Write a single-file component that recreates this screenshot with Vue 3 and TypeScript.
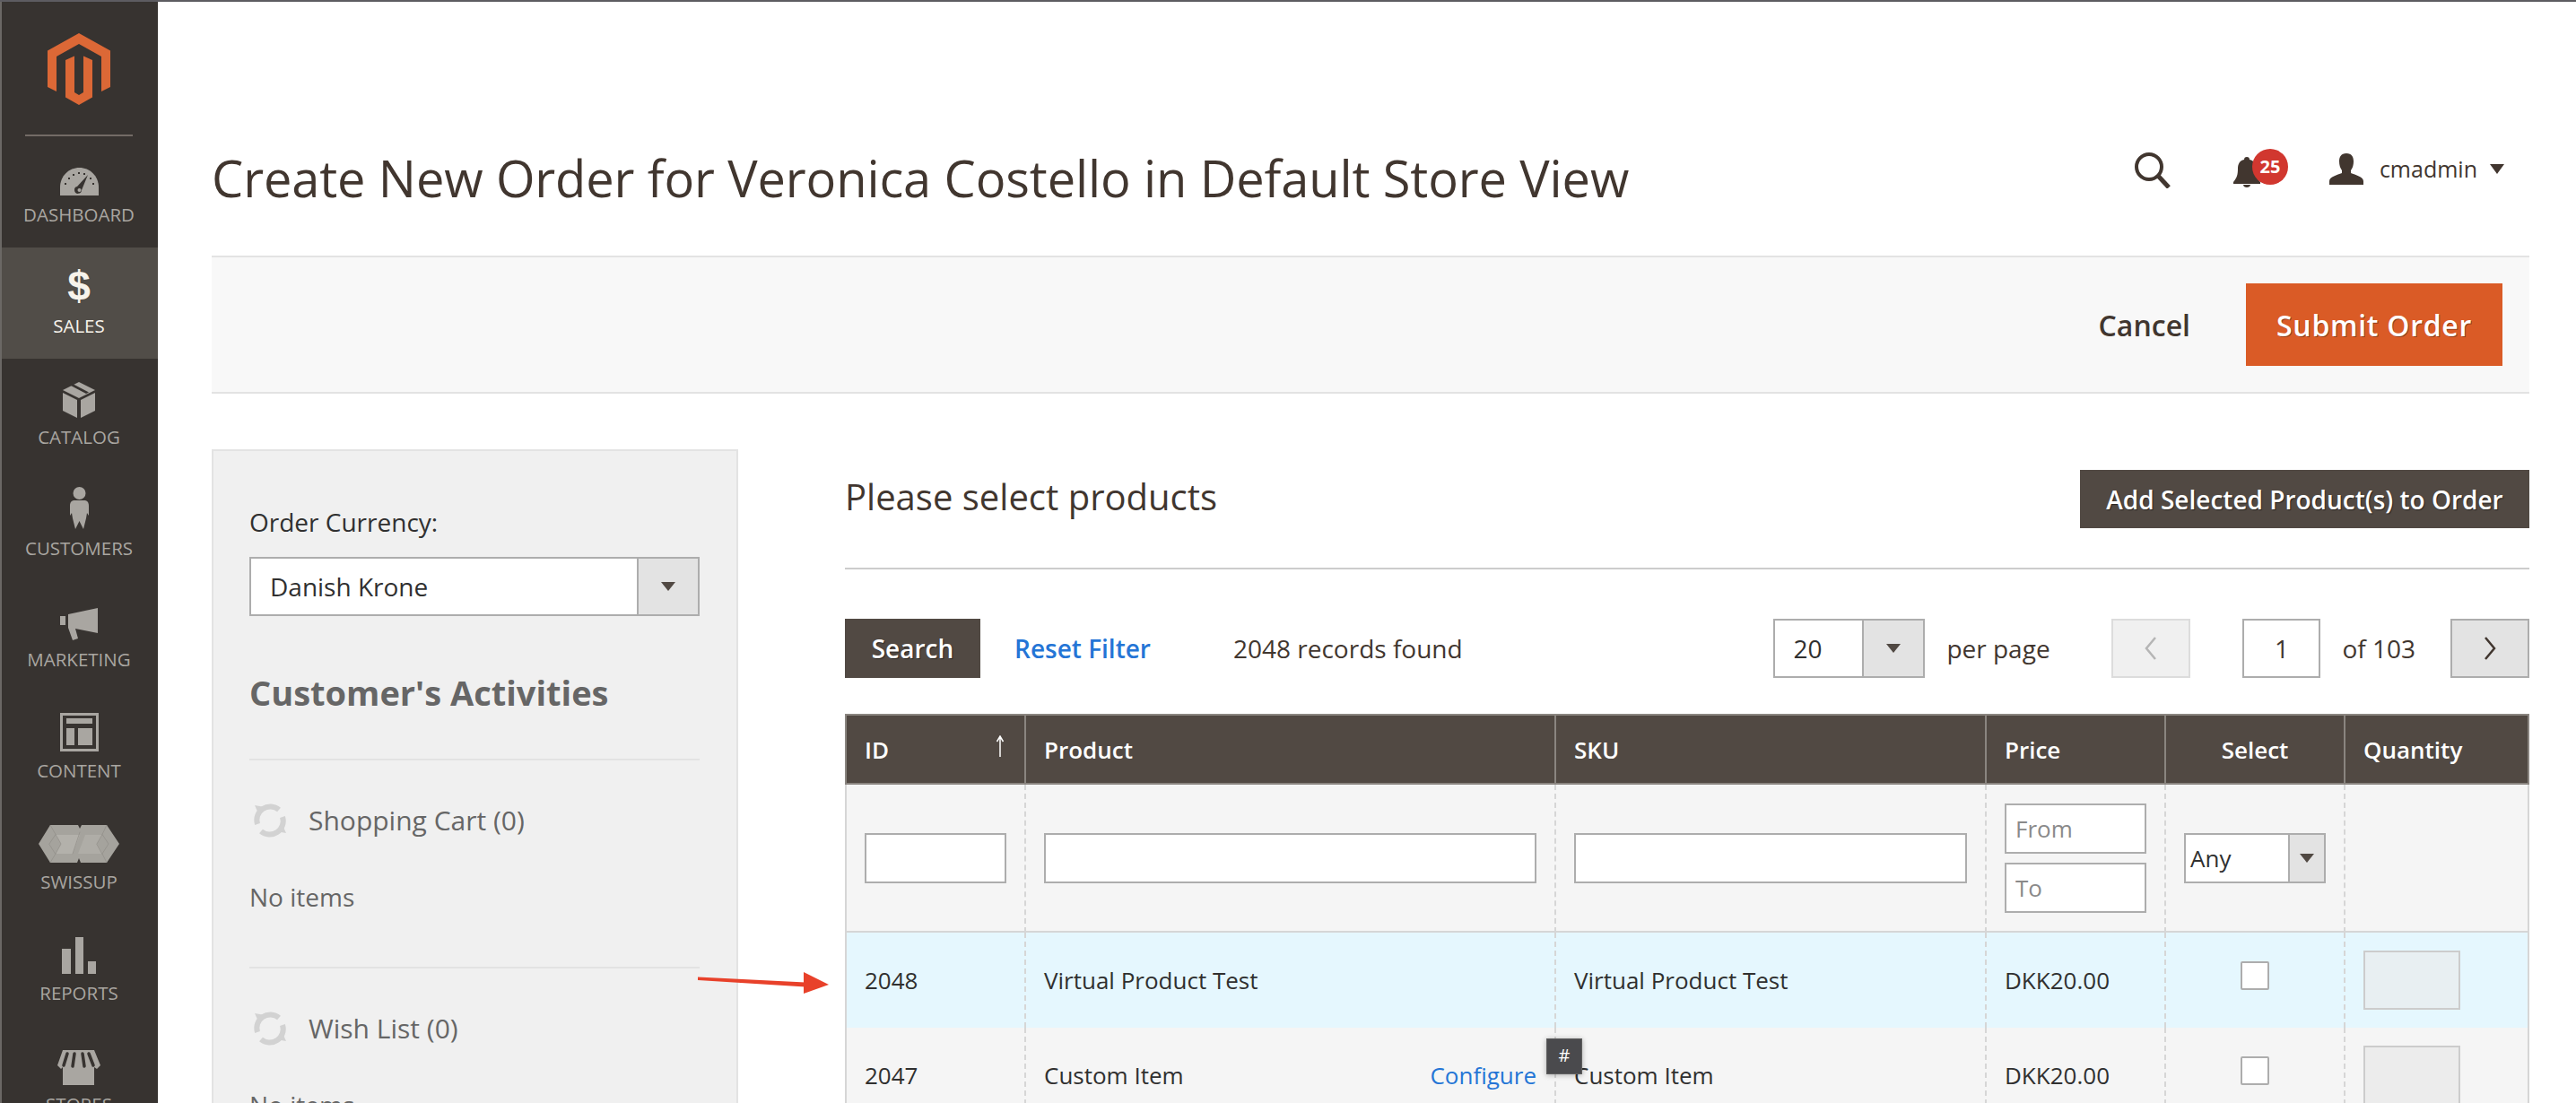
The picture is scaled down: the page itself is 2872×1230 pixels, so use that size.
<template>
  <div class="page">
    <div class="top-line"></div>
    <div class="layout">
      <aside class="sidebar">
        <div class="logo">
          <svg width="70" height="80" viewBox="53 37 70 80">
            <path d="M88 37L123 56.5V97L113 102V63L88 49L63 63V102L53 97V56.5Z" fill="#dc6836" />
            <path d="M73 67L83 62.5V103L88 106L93 103V62.5L103 67V108.5L88 117L73 108.5Z" fill="#dc6836" />
          </svg>
        </div>
        <nav>
          <a v-for="item in navItems" :key="item.label" class="nav-item" :class="{ active: item.active }">
            <span class="nav-icon">
              <span v-if="item.glyph" class="glyph">{{ item.glyph }}</span>
              <svg v-else :width="item.w" :height="item.h" :viewBox="`0 0 ${item.w} ${item.h}`">
                <path
                  v-for="(s, i) in item.shapes"
                  :key="i"
                  :d="s.d"
                  :fill="s.fill ?? (s.stroke ? 'none' : '#a9a6a1')"
                  :fill-rule="s.evenodd ? 'evenodd' : undefined"
                  :stroke="s.stroke"
                  :stroke-width="s.sw"
                  stroke-linecap="round"
                />
              </svg>
            </span>
            <span class="nav-label">{{ item.label }}</span>
          </a>
        </nav>
      </aside>

      <main class="main">
        <header class="page-head">
          <h1>Create New Order for Veronica Costello in Default Store View</h1>
          <div class="head-actions">
            <svg class="search-icon" width="40" height="40" viewBox="0 0 40 40">
              <circle cx="16" cy="16" r="14" fill="none" stroke="#41362f" stroke-width="4" />
              <path d="M26 26L38 39" fill="none" stroke="#41362f" stroke-width="5" />
            </svg>
            <div class="bell">
              <svg width="30" height="34" viewBox="0 0 30 34">
                <path d="M15 0c2 0 3 1 3 3c5 1 7 5 7 10c0 7 1 10 5 15v2H0v-2c4-5 5-8 5-15c0-5 2-9 7-10c0-2 1-3 3-3ZM11 31h8c0 2-2 3-4 3s-4-1-4-3Z" fill="#41362f" />
              </svg>
              <span class="badge">25</span>
            </div>
            <div class="user">
              <svg width="38" height="35" viewBox="0 0 38 35">
                <path d="M19 0c6 0 8 4 8 9c0 4-1 7-3 10v3c5 2 14 4 14 9v4H0v-4c0-5 9-7 14-9v-3c-2-3-3-6-3-10c0-5 2-9 8-9Z" fill="#41362f" />
              </svg>
              <span>cmadmin</span>
              <i class="caret"></i>
            </div>
          </div>
        </header>

        <div class="action-bar">
          <a class="cancel">Cancel</a>
          <button class="submit">Submit Order</button>
        </div>

        <div class="content">
          <section class="panel">
            <label class="field-label">Order Currency:</label>
            <div class="select currency">
              <span class="select-text">Danish Krone</span>
              <span class="select-arrow"><i></i></span>
            </div>
            <h2>Customer's Activities</h2>
            <div v-for="block in activities" :key="block" class="activity">
              <div class="activity-head">
                <svg width="38" height="40" viewBox="0 0 38 40">
                  <path d="M5 24A15 15 0 0 1 29 8" fill="none" stroke="#d2d2d2" stroke-width="6" />
                  <path d="M33 16A15 15 0 0 1 9 32" fill="none" stroke="#d2d2d2" stroke-width="6" />
                  <path d="M1 6L12 8L5 15Z" fill="#d2d2d2" transform="translate(1 -3)" />
                  <path d="M37 34L26 32L33 25Z" fill="#d2d2d2" />
                </svg>
                <span>{{ block }}</span>
              </div>
              <p>No items</p>
            </div>
          </section>

          <section class="products">
            <div class="products-head">
              <h3>Please select products</h3>
              <button class="dark-btn add-btn">Add Selected Product(s) to Order</button>
            </div>

            <div class="toolbar">
              <button class="dark-btn search-btn">Search</button>
              <a class="reset">Reset Filter</a>
              <span class="found">2048 records found</span>
              <div class="pager">
                <div class="select per-page">
                  <span class="select-text">20</span>
                  <span class="select-arrow"><i></i></span>
                </div>
                <span class="per-label">per page</span>
                <button class="page-btn prev">
                  <svg width="16" height="28" viewBox="0 0 16 28"><path d="M13 2L3 14L13 26" fill="none" stroke="#b5b5b5" stroke-width="2.5" /></svg>
                </button>
                <input class="page-input" value="1" />
                <span class="of-label">of 103</span>
                <button class="page-btn next">
                  <svg width="16" height="28" viewBox="0 0 16 28"><path d="M3 2L13 14L3 26" fill="none" stroke="#41362f" stroke-width="2.5" /></svg>
                </button>
              </div>
            </div>

            <table class="grid">
              <colgroup>
                <col v-for="w in colWidths" :key="w.name" :style="{ width: w.px + 'px' }" />
              </colgroup>
              <thead>
                <tr>
                  <th class="sorted">
                    ID
                    <svg class="sort" width="10" height="24" viewBox="0 0 10 24">
                      <path d="M5 24V2M1.5 7L5 1L8.5 7" fill="none" stroke="#fff" stroke-width="1.5" />
                    </svg>
                  </th>
                  <th>Product</th>
                  <th>SKU</th>
                  <th>Price</th>
                  <th class="center">Select</th>
                  <th>Quantity</th>
                </tr>
              </thead>
              <tbody>
                <tr class="filters">
                  <td><input class="text-input" /></td>
                  <td><input class="text-input" /></td>
                  <td><input class="text-input" /></td>
                  <td>
                    <input class="text-input range" placeholder="From" />
                    <input class="text-input range" placeholder="To" />
                  </td>
                  <td>
                    <div class="select any">
                      <span class="select-text">Any</span>
                      <span class="select-arrow"><i></i></span>
                    </div>
                  </td>
                  <td></td>
                </tr>
                <tr v-for="row in rows" :key="row.id" class="data-row" :class="{ highlight: row.highlight }">
                  <td>{{ row.id }}</td>
                  <td class="product-cell">
                    <div class="product-inner">
                      <span>{{ row.name }}</span>
                      <a v-if="row.configure" class="configure">Configure</a>
                    </div>
                    <span v-if="row.configure" class="hash">#</span>
                  </td>
                  <td>{{ row.name }}</td>
                  <td>{{ row.price }}</td>
                  <td class="center"><span class="check"></span></td>
                  <td><input class="qty" disabled /></td>
                </tr>
              </tbody>
            </table>
          </section>
        </div>
      </main>
    </div>

    <svg class="red-arrow" width="146" height="26" viewBox="0 0 146 26">
      <path d="M0 5.5L120 11.5L120 16.5L0 9Z" fill="#e8412a" />
      <path d="M118 0L146 14L118 24Z" fill="#e8412a" />
    </svg>
  </div>
</template>

<script setup lang="ts">
interface Shape {
  d: string
  fill?: string
  stroke?: string
  sw?: number
  evenodd?: boolean
}

interface NavItem {
  label: string
  active?: boolean
  glyph?: string
  w?: number
  h?: number
  shapes?: Shape[]
}

const dark = '#373330'

const navItems: NavItem[] = [
  {
    label: 'Dashboard',
    w: 43,
    h: 31,
    shapes: [
      { d: 'M0 31V22C0 9 10 0 21.5 0S43 9 43 22V31Z' },
      { d: 'M5 17h2v2H5zM9 11h2v2H9zM14 7h2v2h-2zM20 5h2v2h-2zM26 6h2v2h-2zM33 11h2v2h-2zM36 17h2v2h-2z', fill: dark },
      { d: 'M31 8L24 25A4 4 0 1 1 19 21Z', fill: dark },
      { d: 'M19.5 25a2 2 0 1 0 4 0a2 2 0 1 0-4 0', fill: '#a9a6a1' },
    ],
  },
  { label: 'Sales', active: true, glyph: '$' },
  {
    label: 'Catalog',
    w: 36,
    h: 40,
    shapes: [
      { d: 'M18 0L36 9L18 18L0 9Z' },
      { d: 'M8 3.5L26 13L29 11.5L11 2Z', fill: dark },
      { d: 'M0 12L16 20V40L0 32Z' },
      { d: 'M20 20L36 12V32L20 40Z' },
    ],
  },
  {
    label: 'Customers',
    w: 21,
    h: 47,
    shapes: [
      { d: 'M3.5 7a7 7 0 1 0 14 0a7 7 0 1 0-14 0' },
      { d: 'M5 15H16C19 15 21 17 21 21V32L19 29L18 35L15 47L10.5 38L6 47L3 35L2 29L0 32V21C0 17 2 15 5 15Z' },
    ],
  },
  {
    label: 'Marketing',
    w: 42,
    h: 36,
    shapes: [
      { d: 'M0 9H6V19H0Z' },
      { d: 'M9 7L42 0V28L17 23L20 34L14 36L9 22Z' },
    ],
  },
  {
    label: 'Content',
    w: 43,
    h: 43,
    shapes: [
      { d: 'M0 0H43V43H0ZM3 3V40H40V3Z', evenodd: true },
      { d: 'M7 6H36V12H7Z' },
      { d: 'M7 17H16V36H7Z' },
      { d: 'M20 17H36V36H20Z' },
    ],
  },
  {
    label: 'Swissup',
    w: 90,
    h: 42,
    shapes: [
      { d: 'M0 21L13 0H44L46 4L48 0H76L90 21L76 42H47L45 37L43 42H13Z', fill: '#a5a39d' },
      { d: 'M19 11H46L38 32H19L25 21Z', fill: '#b3b1ab' },
      { d: 'M52 11H71L65 21L71 32H44Z', fill: '#afada7' },
      { d: 'M12 21L19 10.5L25 21L19 32ZM65 21L71 10.5L78 21L71 32ZM46 8L38 32M13 0L19 10.5M13 42L19 32M76 0L71 10.5M76 42L71 32', fill: 'none', stroke: '#908e88', sw: 0.7 },
    ],
  },
  {
    label: 'Reports',
    w: 38,
    h: 41,
    shapes: [
      { d: 'M0 13H10V41H0Z' },
      { d: 'M15 0H24V41H15Z' },
      { d: 'M29 27H38V41H29Z' },
    ],
  },
  {
    label: 'Stores',
    w: 48,
    h: 39,
    shapes: [
      { d: 'M6 0H41L48 17L44 21L41 19V39H6V19L4 21L0 17Z' },
      { d: 'M11 4L7 17M19 4L17 18M28 4L30 18M35 4L40 17', stroke: dark, sw: 3.5 },
    ],
  },
]

const activities = ['Shopping Cart (0)', 'Wish List (0)']

const colWidths = [
  { name: 'id', px: 200 },
  { name: 'product', px: 591 },
  { name: 'sku', px: 480 },
  { name: 'price', px: 200 },
  { name: 'select', px: 200 },
  { name: 'qty', px: 207 },
]

const rows = [
  { id: 2048, name: 'Virtual Product Test', price: 'DKK20.00', highlight: true, configure: false },
  { id: 2047, name: 'Custom Item', price: 'DKK20.00', highlight: false, configure: true },
]
</script>

<style>
html,
body {
  margin: 0;
  height: 1230px;
  overflow: hidden;
  background: #fff;
}
</style>

<style scoped>
.page {
  position: relative;
  width: 2872px;
  height: 1230px;
  overflow: hidden;
  font-family: 'Open Sans', 'Liberation Sans', sans-serif;
  font-size: 28px;
  color: #303030;
}
.top-line {
  height: 2px;
  background: #5d5c61;
}
.layout {
  display: flex;
  height: 1228px;
}

/* sidebar */
.sidebar {
  width: 174px;
  flex: none;
  background: #373330;
  border-left: 2px solid #6b6865;
  overflow: hidden;
}
.logo {
  height: 150px;
  margin: 0 28px 0 26px;
  padding-top: 35px;
  box-sizing: border-box;
  border-bottom: 2px solid #736b66;
  display: flex;
  justify-content: center;
  align-items: flex-start;
}
.nav-item {
  display: flex;
  flex-direction: column;
  align-items: center;
  height: 124px;
  color: #a9a6a1;
  padding-right: 2px;
  box-sizing: border-box;
}
.nav-item.active {
  background: #514d48;
  color: #f7f3eb;
}
.nav-icon {
  height: 66px;
  display: flex;
  align-items: flex-end;
}
.glyph {
  font-family: 'Liberation Sans', sans-serif;
  font-weight: 700;
  font-size: 46px;
  line-height: 46px;
  color: #f7f3eb;
}
.nav-label {
  margin-top: 7px;
  font-size: 20.5px;
  line-height: 28px;
  text-transform: uppercase;
}

/* header */
.main {
  flex: 1;
  padding: 0 52px 0 60px;
  min-width: 0;
}
.page-head {
  display: flex;
  justify-content: space-between;
  height: 283px;
  box-sizing: border-box;
}
h1 {
  margin: 160px 0 0;
  font-size: 56px;
  line-height: 72px;
  font-weight: 400;
  letter-spacing: -0.12px;
  color: #41362f;
  white-space: nowrap;
}
.head-actions {
  display: flex;
  align-items: center;
  height: 48px;
  margin-top: 162px;
  margin-right: 28px;
  color: #41362f;
}
.search-icon {
  margin-right: 70px;
  margin-top: 4px;
}
.bell {
  position: relative;
  width: 30px;
  height: 34px;
  margin-right: 77px;
  margin-top: 7px;
}
.bell svg {
  display: block;
}
.badge {
  position: absolute;
  left: 21px;
  top: -9px;
  width: 40px;
  height: 40px;
  border-radius: 50%;
  background: #d1372f;
  color: #fff;
  font-size: 20px;
  font-weight: 700;
  line-height: 40px;
  text-align: center;
}
.user {
  display: flex;
  align-items: center;
  font-size: 25px;
  gap: 18px;
}
.caret {
  width: 0;
  height: 0;
  margin-left: -4px;
  border-left: 8px solid transparent;
  border-right: 8px solid transparent;
  border-top: 11px solid #41362f;
}

/* action bar */
.action-bar {
  display: flex;
  align-items: center;
  justify-content: flex-end;
  gap: 62px;
  height: 154px;
  box-sizing: border-box;
  padding-right: 30px;
  background: #f8f8f8;
  border-top: 2px solid #e3e3e3;
  border-bottom: 2px solid #e3e3e3;
}
.cancel {
  font-size: 32px;
  font-weight: 600;
  color: #41362f;
}
.submit {
  width: 286px;
  height: 92px;
  border: none;
  padding: 0;
  background: #da5b26;
  color: #fff;
  font: 600 32px 'Open Sans', sans-serif;
  letter-spacing: 0.7px;
  text-shadow: 1px 1px 0 rgba(0, 0, 0, 0.35);
}

.content {
  display: flex;
  gap: 119px;
  margin-top: 62px;
}

/* left panel */
.panel {
  width: 587px;
  flex: none;
  box-sizing: border-box;
  padding: 0 41px 0 40px;
  height: 900px;
  background: #f0f0f0;
  border: 2px solid #e3e3e3;
  color: #666;
}
.field-label {
  display: block;
  margin-top: 60px;
  line-height: 38px;
  color: #303030;
}
.select {
  display: flex;
  height: 66px;
  box-sizing: border-box;
  background: #fff;
  border: 2px solid #adadad;
  color: #303030;
}
.select-text {
  flex: 1;
  align-self: center;
  line-height: 36px;
}
.select-arrow {
  display: flex;
  align-items: center;
  justify-content: center;
  background: #e3e3e3;
  border-left: 2px solid #adadad;
}
.select-arrow i {
  width: 0;
  height: 0;
  border-left: 8px solid transparent;
  border-right: 8px solid transparent;
  border-top: 10px solid #514943;
}
.currency {
  margin-top: 20px;
}
.currency .select-text {
  padding-left: 21px;
}
.currency .select-arrow {
  width: 66px;
}
h2 {
  margin: 58px 0 0;
  font-size: 38px;
  line-height: 54px;
  font-weight: 700;
  color: #666;
  padding-bottom: 47px;
}
.activity {
  border-top: 2px solid #e3e3e3;
  height: 232px;
  box-sizing: border-box;
}
.activity-head {
  display: flex;
  align-items: center;
  gap: 24px;
  margin-top: 47px;
  margin-left: 4px;
  font-size: 30px;
  line-height: 40px;
}
.activity p {
  margin: 46px 0 0;
  line-height: 38px;
}

/* products */
.products {
  flex: 1;
  min-width: 0;
}
.products-head {
  display: flex;
  justify-content: space-between;
  align-items: center;
  margin-top: 23px;
  padding-bottom: 44px;
  border-bottom: 2px solid #cccccc;
}
h3 {
  margin: 0 0 5px;
  font-size: 40px;
  font-weight: 400;
  color: #41362f;
  line-height: 54px;
}
.dark-btn {
  border: none;
  padding: 0;
  background: #514943;
  color: #fff;
  font: 600 28px 'Open Sans', sans-serif;
  text-shadow: 1px 1px 1px rgba(0, 0, 0, 0.5);
}
.add-btn {
  width: 501px;
  height: 65px;
}
.toolbar {
  display: flex;
  align-items: center;
  height: 66px;
  margin-top: 55px;
}
.search-btn {
  width: 151px;
  height: 66px;
}
.reset {
  margin-left: 38px;
  font-weight: 600;
  color: #2475d6;
}
.found {
  margin-left: 92px;
  color: #41362f;
}
.pager {
  display: flex;
  align-items: center;
  margin-left: auto;
  color: #41362f;
}
.per-page {
  width: 169px;
}
.per-page .select-text {
  padding-left: 20px;
}
.per-page .select-arrow {
  width: 66px;
}
.per-label {
  margin-left: 24px;
  width: 184px;
}
.page-btn {
  display: flex;
  align-items: center;
  justify-content: center;
  width: 88px;
  height: 66px;
  padding: 0;
  box-sizing: border-box;
}
.prev {
  background: #f0f0f0;
  border: 2px solid #dcdcdc;
}
.next {
  background: #e3e3e3;
  border: 2px solid #adadad;
  margin-left: 39px;
}
.page-input {
  width: 87px;
  height: 66px;
  margin-left: 58px;
  box-sizing: border-box;
  border: 2px solid #adadad;
  text-align: center;
  font: 400 28px 'Open Sans', sans-serif;
  color: #41362f;
  padding: 0;
}
.of-label {
  margin-left: 24px;
}

/* grid */
.grid {
  width: 1878px;
  margin-top: 40px;
  table-layout: fixed;
  border-collapse: separate;
  border-spacing: 0;
  font-size: 26px;
}
.grid th {
  height: 79px;
  box-sizing: border-box;
  padding: 0 20px;
  background: #514943;
  color: #fff;
  font-size: 26px;
  font-weight: 600;
  text-align: left;
  border-top: 2px solid #8a8580;
  border-bottom: 2px solid #8a8580;
  border-left: 2px solid #8a8580;
}
.grid th:last-child {
  border-right: 2px solid #8a8580;
}
.grid .center {
  text-align: center;
}
.sorted {
  position: relative;
}
.sort {
  position: absolute;
  top: 22px;
  right: 22px;
}
.grid td {
  padding: 0 20px;
  box-sizing: border-box;
  border-left: 2px dashed #d6d6d6;
  background: #f5f5f5;
  color: #303030;
}
.grid td:first-child {
  border-left-style: solid;
}
.grid td:last-child {
  border-right: 2px solid #d6d6d6;
}
.filters td {
  height: 165px;
  border-bottom: 2px solid #d6d6d6;
}
.text-input {
  display: block;
  width: 100%;
  height: 56px;
  box-sizing: border-box;
  border: 2px solid #adadad;
  background: #fff;
  font: 400 26px 'Open Sans', sans-serif;
  padding: 0 10px;
}
.text-input::placeholder {
  color: #8a8a8a;
}
.range + .range {
  margin-top: 10px;
}
.any {
  height: 56px;
}
.any .select-text {
  padding-left: 5px;
}
.any .select-arrow {
  width: 38px;
}
.data-row td {
  height: 106px;
}
.data-row.highlight td {
  background: #e5f7fe;
}
.product-cell {
  position: relative;
}
.product-inner {
  display: flex;
  justify-content: space-between;
}
.configure {
  color: #2475d6;
}
.hash {
  position: absolute;
  top: 12px;
  right: -31px;
  width: 40px;
  height: 40px;
  box-sizing: border-box;
  border: 1px solid #5f5f5f;
  background: #4a4a4d;
  color: #fff;
  font-size: 20px;
  line-height: 36px;
  text-align: center;
  box-shadow: 0 1px 6px rgba(0, 0, 0, 0.3);
  z-index: 1;
}
.check {
  display: block;
  width: 32px;
  height: 32px;
  box-sizing: border-box;
  margin: -10px auto 0;
  background: #fff;
  border: 2px solid #adadad;
  border-radius: 2px;
}
.qty {
  display: block;
  width: 108px;
  height: 66px;
  box-sizing: border-box;
  border: 2px solid #cccccc;
  background: #ececec;
}
.highlight .qty {
  background: #e8eff2;
}

/* annotation drawn over the screenshot */
.red-arrow {
  position: absolute;
  left: 778px;
  top: 1084px;
}
</style>
